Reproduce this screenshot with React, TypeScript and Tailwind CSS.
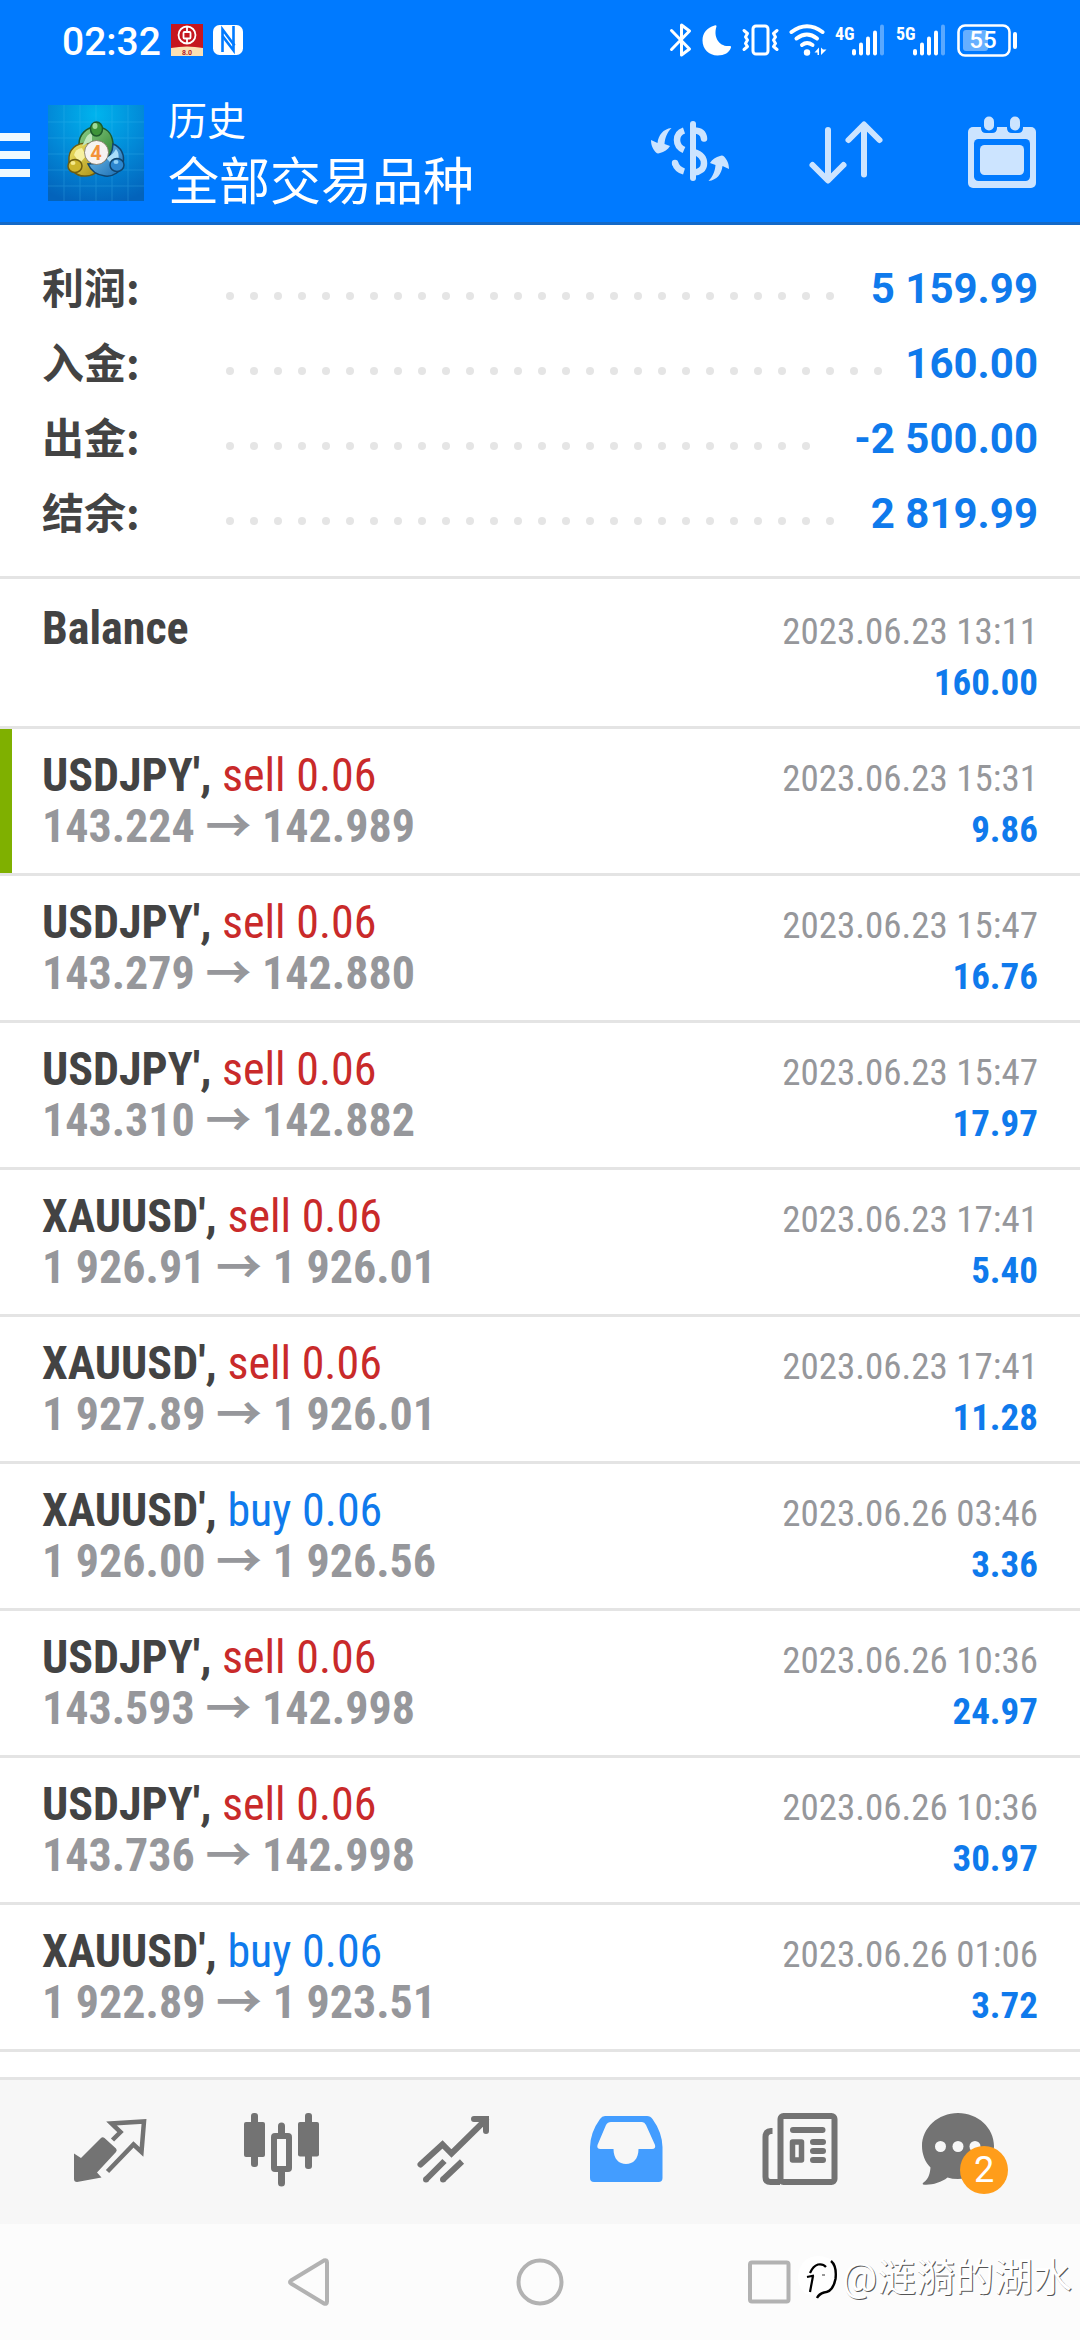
import type { ReactNode } from 'react';

type Deal = {
  symbol: string;
  side?: 'sell' | 'buy';
  volume?: string;
  open?: string;
  close?: string;
  time: string;
  profit: string;
  takeProfit?: boolean;
};

const summary = [
  { label: '利润', value: '5 159.99' },
  { label: '入金', value: '160.00' },
  { label: '出金', value: '-2 500.00' },
  { label: '结余', value: '2 819.99' },
];

const deals: Deal[] = [
  { symbol: 'Balance', time: '2023.06.23 13:11', profit: '160.00' },
  { symbol: "USDJPY'", side: 'sell', volume: '0.06', open: '143.224', close: '142.989', time: '2023.06.23 15:31', profit: '9.86', takeProfit: true },
  { symbol: "USDJPY'", side: 'sell', volume: '0.06', open: '143.279', close: '142.880', time: '2023.06.23 15:47', profit: '16.76' },
  { symbol: "USDJPY'", side: 'sell', volume: '0.06', open: '143.310', close: '142.882', time: '2023.06.23 15:47', profit: '17.97' },
  { symbol: "XAUUSD'", side: 'sell', volume: '0.06', open: '1 926.91', close: '1 926.01', time: '2023.06.23 17:41', profit: '5.40' },
  { symbol: "XAUUSD'", side: 'sell', volume: '0.06', open: '1 927.89', close: '1 926.01', time: '2023.06.23 17:41', profit: '11.28' },
  { symbol: "XAUUSD'", side: 'buy', volume: '0.06', open: '1 926.00', close: '1 926.56', time: '2023.06.26 03:46', profit: '3.36' },
  { symbol: "USDJPY'", side: 'sell', volume: '0.06', open: '143.593', close: '142.998', time: '2023.06.26 10:36', profit: '24.97' },
  { symbol: "USDJPY'", side: 'sell', volume: '0.06', open: '143.736', close: '142.998', time: '2023.06.26 10:36', profit: '30.97' },
  { symbol: "XAUUSD'", side: 'buy', volume: '0.06', open: '1 922.89', close: '1 923.51', time: '2023.06.26 01:06', profit: '3.72' },
];

function SignalBars() {
  return (
    <svg className="h-10 w-[37px]" viewBox="0 0 37 40" fill="white">
      <rect x="1" y="29" width="4" height="6.5" rx="2" />
      <rect x="8" y="22.5" width="4" height="13" rx="2" />
      <rect x="15" y="16.5" width="4" height="19" rx="2" />
      <rect x="22" y="10.5" width="4" height="25" rx="2" />
      <rect x="29" y="4.5" width="4" height="31" rx="2" opacity="0.35" />
    </svg>
  );
}

function Signal({ network }: { network: string }) {
  return (
    <span className="flex">
      <span className="w-4 pt-1 font-['Roboto_Condensed',Roboto,sans-serif] text-[18px] leading-5 font-bold">{network}</span>
      <SignalBars />
    </span>
  );
}

function StatusBar() {
  return (
    <div className="flex h-20 items-center justify-between pr-[61px] pl-[62px]">
      <div className="flex items-center gap-[10px]">
        <span className="pt-1 text-[39px] leading-10 font-medium">02:32</span>
        <svg className="size-8" viewBox="0 0 32 32">
          <rect width="32" height="32" fill="#c5161f" />
          <path d="M0 24 Q16 21 32 24 V32 H0Z" fill="#fbe0b4" />
          <circle cx="16" cy="11" r="8.5" fill="none" stroke="white" strokeWidth="1.8" />
          <rect x="12.5" y="8" width="7" height="6.5" rx="1" fill="none" stroke="white" strokeWidth="1.8" />
          <path d="M16 2.5V8M16 14.5V20" stroke="white" strokeWidth="1.8" />
          <text x="16" y="30.5" fontSize="7" fontWeight="bold" textAnchor="middle" fill="#b3202a">8.0</text>
        </svg>
        <svg className="size-[30px]" viewBox="0 0 30 30">
          <rect width="30" height="30" rx="6.5" fill="white" />
          <path d="M9.5 27V4.5L21.5 20.5" fill="none" stroke="#007aff" strokeWidth="2.6" />
          <path d="M20.5 1V25.5L9.5 11" fill="none" stroke="#007aff" strokeWidth="2.6" />
        </svg>
      </div>
      <div className="flex items-center gap-2">
        <svg className="h-10 w-6" viewBox="0 0 24 40" fill="none" stroke="white" strokeWidth="3" strokeLinecap="round" strokeLinejoin="round">
          <path d="M2.5 10.5L20.5 29L12.5 35V5L20.5 11L2.5 29.5" />
        </svg>
        <svg className="h-10 w-8" viewBox="0 0 32 40" fill="white">
          <path d="M13.5 5.5C6 7.5 1.5 13 1.5 20.5C1.5 29 8 35.5 16.5 35.5C23.5 35.5 28.5 32.5 30 27.5Q30.5 25.5 28.5 26C18 27 12 17 15.5 6.5Q15.5 4.5 13.5 5.5Z" />
        </svg>
        <svg className="h-10 w-[38px]" viewBox="0 0 38 40" fill="none" stroke="white" strokeWidth="3" strokeLinecap="round" strokeLinejoin="round">
          <rect x="12" y="6" width="15" height="28" rx="3" />
          <path d="M3 10.5L6.5 13.5L4.5 17L6.5 20L4.5 23.5L6.5 26.5L3 29.5" />
          <path d="M36 10.5L32.5 13.5L34.5 17L32.5 20L34.5 23.5L32.5 26.5L36 29.5" />
        </svg>
        <svg className="h-10 w-10" viewBox="0 0 40 40" fill="none" stroke="white" strokeWidth="4" strokeLinecap="round">
          <path d="M4.5 12Q20 0.5 35.5 12" />
          <path d="M9.5 18.5Q20 10.5 30 18.5" />
          <path d="M15 25Q20 21 25.5 25" />
          <circle cx="20" cy="32.5" r="3.2" fill="white" stroke="none" />
          <path d="M27.5 32.5L32 27.5V35H30.5V32.5ZM34 27.5V35L39.5 29.5H36Z" fill="white" stroke="none" />
        </svg>
        <Signal network="4G" />
        <Signal network="5G" />
        <div className="relative flex h-10 w-[62px] items-center">
          <svg className="absolute inset-0 h-10 w-[62px]" viewBox="0 0 62 40">
            <rect x="1.5" y="5.5" width="51" height="30" rx="6.5" fill="none" stroke="white" strokeWidth="2.6" />
            <rect x="6" y="10" width="25" height="21" rx="3" fill="white" opacity="0.4" />
            <rect x="56" y="12" width="4" height="17" rx="2" fill="white" />
          </svg>
          <span className="relative w-[52px] text-center text-[24px] leading-6 font-medium">55</span>
        </div>
      </div>
    </div>
  );
}

function AppLogo() {
  return (
    <svg className="size-24" viewBox="0 0 96 96">
      <defs>
        <radialGradient id="logo-bg" cx="0.5" cy="0.1" r="0.95">
          <stop offset="0" stopColor="#00b4ee" />
          <stop offset="0.55" stopColor="#0287d6" />
          <stop offset="1" stopColor="#0363bb" />
        </radialGradient>
        <linearGradient id="logo-green" x1="0" y1="0" x2="1" y2="1">
          <stop offset="0" stopColor="#8fd08a" />
          <stop offset="1" stopColor="#2a7f2b" />
        </linearGradient>
        <linearGradient id="logo-yellow" x1="0" y1="0" x2="1" y2="1">
          <stop offset="0" stopColor="#f3e76a" />
          <stop offset="1" stopColor="#a88d12" />
        </linearGradient>
        <linearGradient id="logo-blue" x1="0" y1="0" x2="1" y2="1">
          <stop offset="0" stopColor="#7cc8f2" />
          <stop offset="1" stopColor="#1468b0" />
        </linearGradient>
      </defs>
      <rect width="96" height="96" fill="url(#logo-bg)" />
      <path d="M0 17H96M0 33H96M0 49H96M0 65H96M0 81H96M16 0V96M32 0V96M48 0V96M64 0V96M80 0V96" stroke="#4cc4f5" strokeWidth="1" opacity="0.25" />
      <g strokeWidth="1.5">
        <path d="M48 22C38 22 31 30 31 39V46L43 50L54 58C62 55 66 47 65 38C64 28 58 22 48 22Z" fill="url(#logo-green)" stroke="#1d5a2c" />
        <path d="M42 39C32 36 22 42 21 52C20 64 28 72 38 71C44 71 48 68 51 65L44 50Z" fill="url(#logo-yellow)" stroke="#6d5d12" />
        <path d="M65 39C73 42 77 50 75 58C73 67 65 72 57 71C49 70 43 66 40 59L53 58C60 54 65 48 65 39Z" fill="url(#logo-blue)" stroke="#10456f" />
        <path d="M34 41L37 35Q39 29 44 28V36Z" fill="#bfe6bb" stroke="none" />
        <path d="M26 50Q27 44 34 43L38 51L32 58Z" fill="#f7f1a1" stroke="none" />
        <path d="M68 44Q72 49 70 55L62 57L58 53Q65 50 68 44Z" fill="#a9defa" stroke="none" />
        <ellipse cx="48.5" cy="24" rx="6" ry="7" fill="#3d9439" stroke="#1d5a2c" />
        <ellipse cx="27" cy="61" rx="7" ry="6.5" fill="#cdb52c" stroke="#6d5d12" />
        <ellipse cx="69" cy="60" rx="7" ry="6.5" fill="#2c86cf" stroke="#10456f" />
        <ellipse cx="47" cy="21" rx="2.5" ry="3" fill="#9fdb98" stroke="none" />
        <ellipse cx="25" cy="58" rx="2.5" ry="2" fill="#f5ea8c" stroke="none" />
        <ellipse cx="68" cy="57" rx="2.5" ry="2" fill="#8fd0f7" stroke="none" />
      </g>
      <circle cx="48.5" cy="47.5" r="12" fill="#f6f3f1" stroke="#77705c" strokeWidth="0.8" />
      <text x="48" y="54.5" fontSize="20" fontWeight="bold" textAnchor="middle" fill="#f3923a">4</text>
    </svg>
  );
}

function Header() {
  return (
    <header className="border-b-3 border-[#1469c7] bg-[#007aff] text-white">
      <StatusBar />
      <div className="flex h-[142px] items-center pt-1 pr-[42px]">
        <button aria-label="菜单" className="flex flex-col gap-[10px] pt-1">
          <span className="h-2 w-[30px] bg-[#f0faff]" />
          <span className="h-2 w-[30px] bg-[#f0faff]" />
          <span className="h-2 w-[30px] bg-[#f0faff]" />
        </button>
        <div className="ml-[18px]">
          <AppLogo />
        </div>
        <div className="ml-6 flex-1 pt-1">
          <div className="text-[39px] leading-[56px]">历史</div>
          <h1 className="text-[51px] leading-[66px]">全部交易品种</h1>
        </div>
        <div className="flex items-center gap-[74px] text-[#cce4ff]">
          <button aria-label="币种">
            <svg className="h-[70px] w-[84px]" viewBox="0 0 84 70" fill="none" stroke="currentColor" strokeWidth="6.5">
              <rect x="42" y="3" width="6" height="60" rx="3" fill="currentColor" stroke="none" />
              <path d="M46 12.5C52 12.5 55.5 15 56 20.5" strokeLinecap="round" />
              <path d="M46 34C53 36 56 40 56 45.5C56 51 52 54 46 54.5" />
              <path d="M36 12.5C31.5 14 29 17.5 29 22C29 27 31.5 30 36 32" />
              <path d="M36 53.5C31 52 28.5 50 27 45" />
              <circle cx="27" cy="45" r="3.2" fill="currentColor" stroke="none" />
              <g fill="currentColor" stroke="none">
                <path d="M23.5 10C15 11 10.5 17 9.5 25L3 22C3 28 5.5 32 8 34.5Q9.5 36 12 35C16 34 20 31.5 22 28L16.5 26C17 20 19 14.5 23.5 10Z" />
                <path transform="rotate(180 42 36.5)" d="M23.5 10C15 11 10.5 17 9.5 25L3 22C3 28 5.5 32 8 34.5Q9.5 36 12 35C16 34 20 31.5 22 28L16.5 26C17 20 19 14.5 23.5 10Z" />
              </g>
            </svg>
          </button>
          <button aria-label="排序">
            <svg className="h-[70px] w-[86px]" viewBox="0 0 86 70" fill="none" stroke="currentColor" strokeWidth="6" strokeLinecap="round" strokeLinejoin="round">
              <path d="M22 12V61M6.5 47L22 62.5L37.5 47" />
              <path d="M58 56.5V8M42.5 22L58 6.5L73.5 22" />
            </svg>
          </button>
          <button aria-label="日期">
            <svg className="h-[78px] w-[72px]" viewBox="0 0 72 78" fill="currentColor">
              <rect x="2" y="13" width="68" height="61" rx="5" />
              <path d="M15 12H31V14Q31 19 26 19H20Q15 19 15 14ZM41 12H57V14Q57 19 52 19H46Q41 19 41 14Z" fill="#007aff" />
              <rect x="8" y="25" width="56" height="42" rx="4.5" fill="#007aff" />
              <rect x="14" y="31" width="44" height="30" rx="4.5" />
              <rect x="18" y="2.5" width="10" height="14" rx="5" />
              <rect x="44" y="2.5" width="10" height="14" rx="5" />
            </svg>
          </button>
        </div>
      </div>
    </header>
  );
}

// Leader dots: whole dots only, the ones that don't fit wrap out of sight
function Dots() {
  return (
    <div className="mt-3.5 flex h-2 flex-1 flex-wrap gap-x-4 overflow-hidden">
      {Array.from({ length: 60 }, (_, i) => (
        <span key={i} className="size-2 rounded-full bg-[#e5e5e5]" />
      ))}
    </div>
  );
}

function Summary() {
  return (
    <section className="border-b-3 border-[#e4e4e4] px-[42px] pt-[26px] pb-[25px]">
      {summary.map((row) => (
        <div key={row.label} className="flex h-[75px] items-center text-[42px] leading-[50px] font-bold">
          <span className="w-46 pb-1.5 font-['Noto_Sans_CJK_SC',sans-serif] text-[#434343]">{row.label}:</span>
          <Dots />
          <span className="pl-[22px] text-[#0f7aec]">{row.value}</span>
        </div>
      ))}
    </section>
  );
}

function DealRow({ deal }: { deal: Deal }) {
  return (
    <li className="flex border-b-3 border-[#e4e4e4] font-['Roboto_Condensed',Roboto,'Noto_Sans_CJK_SC',sans-serif]">
      <span className={deal.takeProfit ? 'w-3 bg-[#7fb000]' : 'w-3'} />
      <div className="flex-1 py-[21px] pr-[42px] pl-[30px]">
        <div className="flex h-[51px] items-baseline justify-between text-[46px] leading-[51px]">
          <span>
            <span className="font-bold text-[#434343]">
              {deal.symbol}
              {deal.side && ','}
            </span>
            {deal.side && (
              <span className={deal.side === 'sell' ? 'text-[#c92a2a]' : 'text-[#0f7aec]'}>
                {' '}
                {deal.side} {deal.volume}
              </span>
            )}
          </span>
          <time className="text-[37px] text-[#96979b]">{deal.time}</time>
        </div>
        <div className="flex h-[51px] items-baseline justify-between text-[46px] leading-[51px] font-bold">
          <span className="text-[#96979b]">
            {deal.open && `${deal.open} → ${deal.close}`}
            {!deal.open && '\u00a0'}
          </span>
          <span className="text-[37px] text-[#0f7aec]">{deal.profit}</span>
        </div>
      </div>
    </li>
  );
}

function Tab({ label, active, children }: { label: string; active?: boolean; children: ReactNode }) {
  return (
    <button aria-label={label} className={active ? 'flex flex-1 justify-center text-[#439dff]' : 'flex flex-1 justify-center text-[#737373]'}>
      {children}
    </button>
  );
}

function TabBar() {
  return (
    <nav className="flex h-[147px] items-center border-t-3 border-[#e4e4e4] bg-[#f7f7f7] px-6">
      <Tab label="报价">
        <svg className="h-22 w-20" viewBox="0 0 80 88">
          <g transform="translate(2 9)">
            <path d="M2 36.5L9 41L29 21Q30.5 19.5 32.5 21L44 31.5Q45.5 33 44 35L25 55.5L29.5 60.5L5 65Q2 65 2 62Z" fill="currentColor" />
            <path d="M40.5 23L48.5 15L39.5 6.5L72 4.5L69.5 35L61.5 27.5L35.5 54.5" fill="none" stroke="currentColor" strokeWidth="4.5" />
          </g>
        </svg>
      </Tab>
      <Tab label="图表">
        <svg className="h-22 w-20" viewBox="0 0 80 88" fill="currentColor">
          <rect x="2" y="14" width="21" height="35" rx="2" />
          <rect x="9" y="5" width="7" height="54" rx="3" />
          <rect x="32" y="28" width="15" height="33" rx="1" fill="none" stroke="currentColor" strokeWidth="6" />
          <path d="M36 26V18Q36 14.5 39.5 14.5Q43 14.5 43 18V26ZM36 63V75Q36 78.5 39.5 78.5Q43 78.5 43 75V63Z" />
          <rect x="56" y="14" width="21" height="34.5" rx="2" />
          <rect x="63" y="5" width="7" height="56" rx="3" />
        </svg>
      </Tab>
      <Tab label="交易">
        <svg className="h-22 w-20" viewBox="0 0 80 88" fill="none" stroke="currentColor" strokeWidth="6">
          <path d="M6.5 56.5L28.5 36.5L37.5 45.5L72 11.5M60 11H72V23" strokeLinecap="round" />
          <path d="M12 71.5L30.5 53M29 71.5L48 53.5" />
          <g fill="currentColor" stroke="none">
            <circle cx="12" cy="71.5" r="3" />
            <circle cx="29" cy="71.5" r="3" />
          </g>
        </svg>
      </Tab>
      <Tab label="历史" active>
        <svg className="h-22 w-20" viewBox="0 0 80 88" fill="currentColor">
          <path
            fillRule="evenodd"
            d="M19 8H61Q64.5 8 66.5 11Q76 24 76.5 39V70Q76.5 74 72.5 74H8Q4 74 4 70V39Q4.5 24 14 11Q16 8 19 8ZM25 14Q21.5 14 20 17L11.5 37Q10.5 41 14.5 41H27.5C27.5 51 33 56 40 56C47 56 52.5 51 52.5 41H66Q70 41 69 37L60 17Q58.5 14 56 14Z"
          />
        </svg>
      </Tab>
      <Tab label="新闻">
        <svg className="h-22 w-20" viewBox="0 0 80 88" fill="none" stroke="currentColor" strokeWidth="6">
          <rect x="22.5" y="8" width="54" height="66" rx="3" />
          <path d="M14.5 23H13Q7.5 23.5 7.5 29V69Q7.5 74 12.5 74H22" />
          <path d="M35 22H64.5M55 34H65M55 43H65M55 52H65" strokeLinecap="round" />
          <rect x="34.5" y="34" width="9" height="18" strokeWidth="5.5" strokeLinejoin="round" />
        </svg>
      </Tab>
      <Tab label="消息">
        <span className="relative">
          <svg className="h-22 w-24" viewBox="0 0 96 88" fill="currentColor">
            <path d="M36 5C56 5 72 20 72 38C72 56 56 71 36 71Q30 71 25.5 69.5C19 75 8 77.5 1 76.5Q0 75.5 1.5 74.5C7 70.5 8 65 8.5 59.5C3 54 0 46 0 38C0 20 16 5 36 5Z" />
            <g fill="#f7f7f7">
              <circle cx="18.5" cy="38.5" r="5.5" />
              <circle cx="36" cy="38.5" r="5.5" />
              <circle cx="53" cy="38.5" r="5.5" />
            </g>
          </svg>
          <span className="absolute right-[10px] bottom-[2px] flex size-12 items-center justify-center rounded-full bg-[#ff9d1a] text-[36px] leading-none text-white">2</span>
        </span>
      </Tab>
    </nav>
  );
}

function SystemNav() {
  return (
    <div className="relative flex h-[116px] items-center justify-center gap-[182px] bg-[#fcfcfc] text-[#b2b2b2]">
      <button aria-label="返回">
        <svg className="size-12" viewBox="0 0 48 48" fill="none" stroke="currentColor" strokeWidth="4" strokeLinejoin="round">
          <path d="M5 22.5L38 2.5Q41 1.5 41 4.5V43.5Q41 46.5 38 45.5L5 25.5Q3 24 5 22.5Z" />
        </svg>
      </button>
      <button aria-label="主屏幕">
        <svg className="size-12" viewBox="0 0 48 48" fill="none" stroke="currentColor" strokeWidth="4">
          <circle cx="24" cy="24" r="21.5" />
        </svg>
      </button>
      <button aria-label="最近任务">
        <svg className="size-12" viewBox="0 0 48 48" fill="none" stroke="currentColor" strokeWidth="4">
          <rect x="4" y="4.5" width="38.5" height="39" rx="2" />
        </svg>
      </button>
      <div className="absolute inset-y-0 right-2 flex items-center pb-2">
        <svg className="h-12 w-11" viewBox="0 0 44 48" fill="none">
          <path d="M0 24Q1 3 20 2Q41 3 41 22Q40 38 20 42L8 40Q0 34 0 24Z" fill="white" />
          <path d="M12 19Q15 12 20 10.500Q25 9.500 28 13M9 23L16 21.500M15 22L12 38" stroke="black" strokeWidth="2.200" />
          <path d="M33 7Q39 12 37.500 25Q35 38 26 38.500Q21 40 19 44" stroke="black" strokeWidth="2.400" />
          <path d="M24 21H27" stroke="#777" strokeWidth="1.500" />
        </svg>
        <span className="text-[39px] leading-none text-white [text-shadow:1px_1px_0_#555]">@涟漪的湖水</span>
      </div>
    </div>
  );
}

export default function App() {
  return (
    <div className="flex min-h-screen flex-col bg-white font-[Roboto,'Noto_Sans_CJK_SC',sans-serif]">
      <Header />
      <main className="flex-1">
        <Summary />
        <ul className="pt-[3px]">
          {deals.map((deal, i) => (
            <DealRow key={i} deal={deal} />
          ))}
        </ul>
      </main>
      <TabBar />
      <SystemNav />
    </div>
  );
}
